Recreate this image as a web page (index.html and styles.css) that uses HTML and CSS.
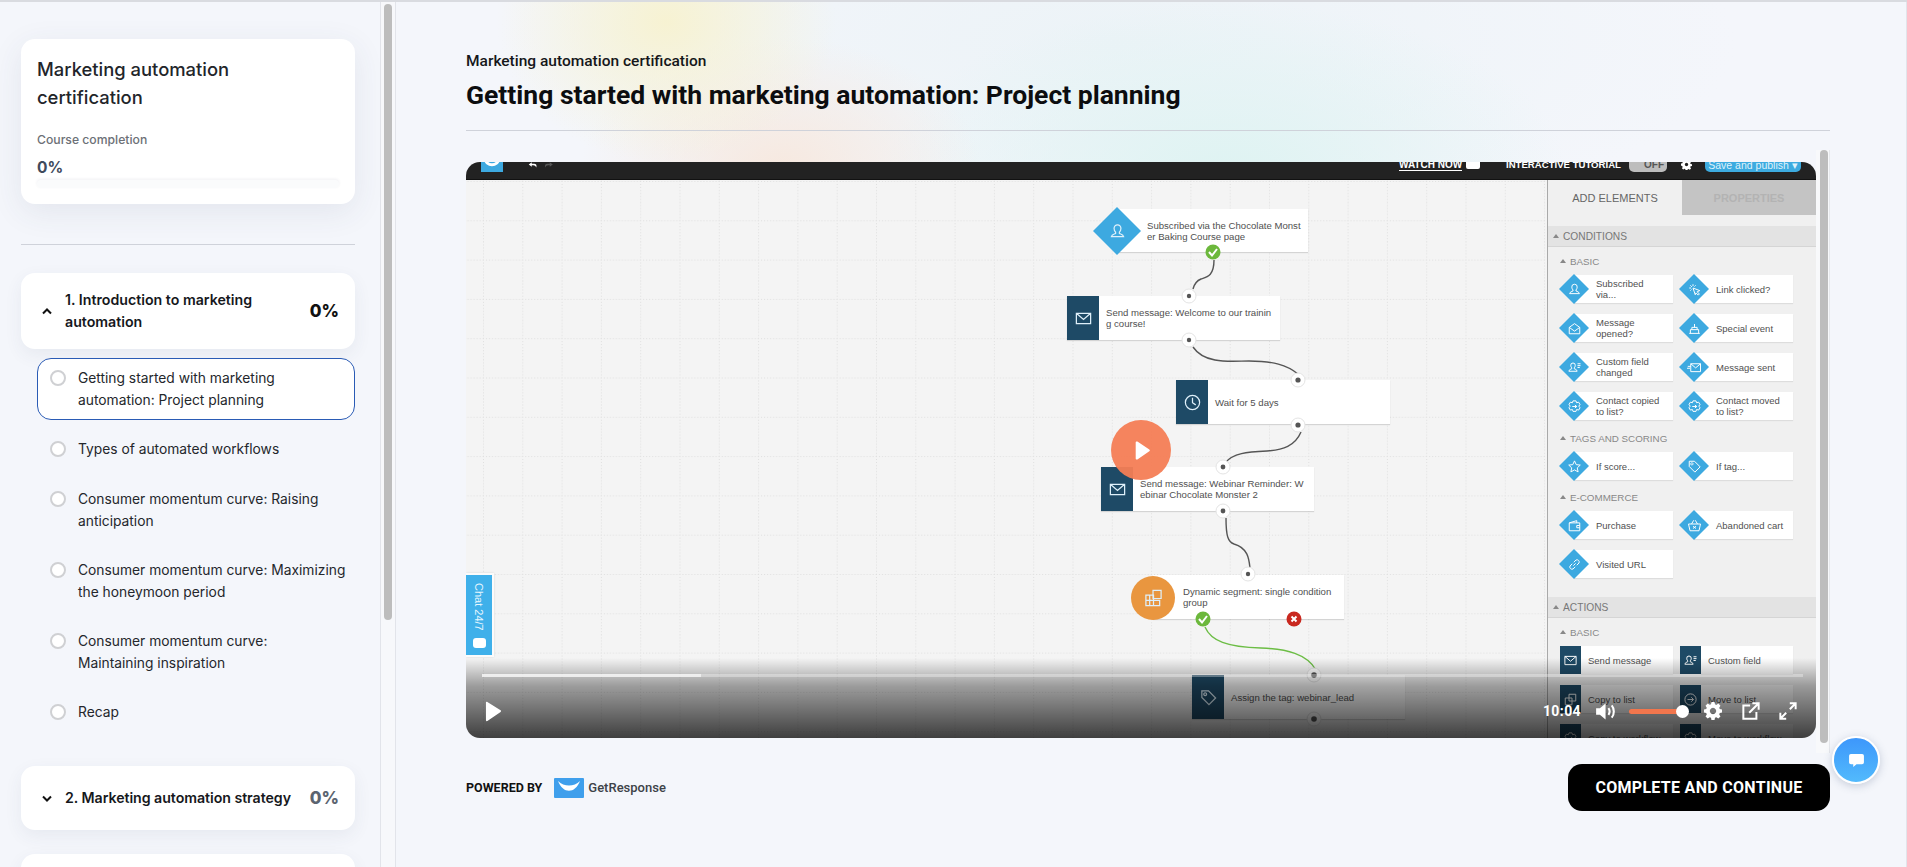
FILE: index.html
```html
<!DOCTYPE html>
<html lang="en">
<head>
<meta charset="utf-8">
<title>Getting started with marketing automation: Project planning</title>
<link rel="stylesheet" href="styles.css">
</head>
<body>
<svg class="defs" width="0" height="0" aria-hidden="true">
  <defs>
    <symbol id="i-user" viewBox="0 0 20 20"><path d="M10 3a3.6 3.6 0 0 0-3.6 3.8c0 1.800.8 3 1.600 3.800v1.400c-1.200.6-4.200 1.200-4.500 3.500h13c-.3-2.300-3.300-2.900-4.500-3.500v-1.400c.8-.8 1.600-2 1.600-3.800A3.600 3.600 0 0 0 10 3z"/></symbol>
    <symbol id="i-mail" viewBox="0 0 20 20"><path d="M2.500 4.500h15v11h-15zM2.500 4.500l7.500 6.500 7.500-6.500"/></symbol>
    <symbol id="i-clock" viewBox="0 0 20 20"><circle cx="10" cy="10" r="7.500"/><path d="M10 5v5.300l3.400 2.200"/></symbol>
    <symbol id="i-cursor" viewBox="0 0 20 20"><path d="M8 8l9 3.500-3.500 1.500 3 3-1.500 1.500-3-3L11 17zM3 8h2.500M8 3v2.500M4.500 4.500l2 2M11.500 4.500l-1.500 1.500M4.500 11.500l1.500-1.500"/></symbol>
    <symbol id="i-open" viewBox="0 0 20 20"><path d="M3 8.500l7-5 7 5v8.500H3zM3 8.500l7 5 7-5"/></symbol>
    <symbol id="i-cake" viewBox="0 0 20 20"><path d="M3 16.500h14M4.500 16.500v-5h11v5M6.500 11.500v-3h7v3M10 8.500V4"/></symbol>
    <symbol id="i-sent" viewBox="0 0 20 20"><path d="M5 5h13v10.500H5zM5 5l6.500 5.500L18 5M1 8.500h4M0 11h4"/></symbol>
    <symbol id="i-field" viewBox="0 0 20 20"><path d="M8 4a3 3 0 0 0-3 3.200c0 1.500.6 2.500 1.300 3.200v1.300c-1 .5-3.600 1-3.800 3.300h11c-.2-2.300-2.800-2.800-3.800-3.300v-1.300c.7-.7 1.300-1.700 1.300-3.200A3 3 0 0 0 8 4zM14 5h4M14 7.500h4M14 10h3"/></symbol>
    <symbol id="i-gearp" viewBox="0 0 20 20"><path d="M8 2.500h4l.8 2.500 2.700-.8 2 3.400-2 1.900 2 1.900-2 3.400-2.700-.8-.8 2.500H8l-.8-2.500-2.700.8-2-3.400 2-1.900-2-1.900 2-3.400 2.700.8z"/><path d="M7 10h6M10.500 8l2.500 2-2.500 2"/></symbol>
    <symbol id="i-star" viewBox="0 0 20 20"><path d="M10 2.500l2.300 5 5.400.6-4 3.700 1.100 5.400L10 14.500l-4.800 2.700 1.100-5.400-4-3.700 5.400-.6z"/></symbol>
    <symbol id="i-tag" viewBox="0 0 20 20"><path d="M3 3h7l7.500 7.500-7 7L3 10zM6.500 5a1.500 1.500 0 1 0 .01 0"/></symbol>
    <symbol id="i-wallet" viewBox="0 0 20 20"><path d="M3 6.500l10-3v3M3 6.500h14v10.500H3zM17 10h-4v3h4"/></symbol>
    <symbol id="i-basket" viewBox="0 0 20 20"><path d="M2 8h16l-2 9H4zM6 8l3-5M14 8l-3-5M8 11l4 3M12 11l-4 3"/></symbol>
    <symbol id="i-link" viewBox="0 0 20 20"><path d="M8.500 11.500l3-3M7 9l-3 3a3 3 0 0 0 4 4l3-3M13 11l3-3a3 3 0 0 0-4-4L9 7"/></symbol>
    <symbol id="i-copy" viewBox="0 0 20 20"><path d="M8 3h9v9H8zM3 8h9v9H3z"/></symbol>
    <symbol id="i-move" viewBox="0 0 20 20"><circle cx="10" cy="10" r="7.500"/><path d="M6 10h8M11 7l3 3-3 3"/></symbol>
    <symbol id="i-seg" viewBox="0 0 20 20"><path d="M2 6.500h8v11H2zM2 12h8M6 6.500v11M10 12h6.500v5.500H10M9.500 1.500h8.500v8.500H9.500z"/></symbol>
  </defs>
</svg>
<div class="app">
  <aside class="sidebar">
    <div class="sidebar-inner">
      <section class="course-card">
        <h2 class="course-title">Marketing automation certification</h2>
        <p class="course-label">Course completion</p>
        <p class="course-pct">0%</p>
        <div class="course-bar"></div>
      </section>
      <hr class="side-rule">
      <div class="section-head section-open">
        <svg class="chev" viewBox="0 0 10 7"><path d="M1 5.500L5 1.500l4 4"/></svg>
        <span class="section-name">1. Introduction to marketing automation</span>
        <span class="section-pct">0%</span>
      </div>
      <ul class="lessons">
        <li class="lesson lesson-active"><span class="radio"></span><span class="lesson-name">Getting started with marketing automation: Project planning</span></li>
        <li class="lesson"><span class="radio"></span><span class="lesson-name">Types of automated workflows</span></li>
        <li class="lesson lesson-after-single"><span class="radio"></span><span class="lesson-name">Consumer momentum curve: Raising anticipation</span></li>
        <li class="lesson"><span class="radio"></span><span class="lesson-name">Consumer momentum curve: Maximizing the honeymoon period</span></li>
        <li class="lesson"><span class="radio"></span><span class="lesson-name">Consumer momentum curve:<br>Maintaining inspiration</span></li>
        <li class="lesson"><span class="radio"></span><span class="lesson-name">Recap</span></li>
      </ul>
      <div class="section-head section-closed">
        <svg class="chev" viewBox="0 0 10 7"><path d="M1 1.500l4 4 4-4"/></svg>
        <span class="section-name">2. Marketing automation strategy</span>
        <span class="section-pct section-pct-muted">0%</span>
      </div>
      <div class="section-head section-closed section-next"></div>
    </div>
    <div class="side-track"><div class="side-thumb"></div></div>
  </aside>

  <main class="main">
    <div class="lesson-area">
      <header class="lesson-header">
        <p class="lesson-course">Marketing automation certification</p>
        <h1 class="lesson-title">Getting started with marketing automation: Project planning</h1>
      </header>
      <div class="player-wrap">
        <div class="player">
          <div class="topbar">
            <svg class="tb-logo" viewBox="0 0 22 12"><rect width="22" height="12" fill="#3da9e0"/><path d="M4-2c1 9 13 9 14 0" fill="none" stroke="#fff" stroke-width="3"/></svg>
            <svg class="tb-undo" viewBox="0 0 40 10"><path d="M1 3l4-3v2h3c3 0 4 2 3 5-1-2-2-3-4-3H5v2z" fill="#fff"/><path d="M33 3l-4-3v2h-3c-3 0-4 2-3 5 1-2 2-3 4-3h2v2z" fill="#555"/></svg>
            <span class="tb-watch">WATCH NOW</span>
            <span class="tb-cam"></span>
            <span class="tb-tutorial">INTERACTIVE TUTORIAL</span>
            <span class="tb-toggle">OFF</span>
            <svg class="tb-gear" viewBox="0 0 20 20"><path d="M8.300 1h3.400l.5 2.600 1.500.7 2.300-1.400 2.300 2.300-1.500 2.300.6 1.500 2.600.5v3.400l-2.600.5-.6 1.500 1.500 2.300-2.300 2.300-2.300-1.400-1.500.6-.5 2.300H8.300l-.5-2.600-1.500-.6-2.300 1.400-2.300-2.300 1.400-2.300-.6-1.500L0 11.700V8.300l2.500-.5.600-1.500L1.700 4l2.300-2.300 2.300 1.500 1.500-.7z" fill="#fff"/><circle cx="10" cy="10" r="3" fill="#222"/></svg>
            <span class="tb-save">Save and publish ▾</span>
          </div>

          <svg class="gridlines" aria-hidden="true">
            <defs>
              <pattern id="gridtile" x="17" y="1" width="39.300" height="39.300" patternUnits="userSpaceOnUse">
                <path d="M.5 0v39.300M0 .5h39.300" stroke="#dedede" stroke-width="1" stroke-dasharray="1 2" fill="none"/>
              </pattern>
            </defs>
            <rect width="100%" height="100%" fill="url(#gridtile)"/>
          </svg>

          <div class="node node-1"><span class="node-text">Subscribed via the Chocolate Monst<br>er Baking Course page</span></div>
          <div class="diamond-big"><svg class="ico ico-big"><use href="#i-user"/></svg></div>
          <div class="node node-2"><span class="node-sq"><svg class="ico ico-big"><use href="#i-mail"/></svg></span><span class="node-text">Send message: Welcome to our trainin<br>g course!</span></div>
          <div class="node node-3"><span class="node-sq"><svg class="ico ico-big"><use href="#i-clock"/></svg></span><span class="node-text">Wait for 5 days</span></div>
          <div class="node node-4"><span class="node-sq"><svg class="ico ico-big"><use href="#i-mail"/></svg></span><span class="node-text">Send message: Webinar Reminder: W<br>ebinar Chocolate Monster 2</span></div>
          <div class="node node-5"><span class="node-text">Dynamic segment: single condition<br>group</span></div>
          <div class="circle-big"><svg class="ico ico-big"><use href="#i-seg"/></svg></div>
          <div class="node node-6"><span class="node-sq"><svg class="ico ico-big"><use href="#i-tag"/></svg></span><span class="node-text">Assign the tag: webinar_lead</span></div>

          <svg class="wires" viewBox="466 162 1350 576" aria-hidden="true">
            <g fill="none" stroke="#555" stroke-width="1.400">
              <path d="M1214 260c0 16-7 17-13 19-5 2-7 6-8 10"/>
              <path d="M1193 347c12 18 40 14 56 14 24 0 38 4 49 13"/>
              <path d="M1301 432c-6 14-18 18-34 19-20 1-34 2-42 12"/>
              <path d="M1226 518c0 18 2 24 8 26 14 4 15 15 16 24"/>
            </g>
            <path d="M1205 627c6 14 22 20 56 21 26 1 46 6 55 22" fill="none" stroke="#6cbd45" stroke-width="1.400"/>
            <g class="ports">
              <circle cx="1189" cy="296" r="7"/><circle cx="1189" cy="340" r="7"/>
              <circle cx="1298" cy="380" r="7"/><circle cx="1298" cy="425" r="7"/>
              <circle cx="1223" cy="467" r="7"/><circle cx="1223" cy="511" r="7"/>
              <circle cx="1248" cy="574" r="7"/><circle cx="1314" cy="675" r="7"/><circle cx="1314" cy="719" r="7"/>
            </g>
            <g fill="#555">
              <circle cx="1189" cy="296" r="2.200"/><circle cx="1189" cy="340" r="2.200"/>
              <circle cx="1298" cy="380" r="2.600"/><circle cx="1298" cy="425" r="2.600"/>
              <circle cx="1223" cy="467" r="2.400"/><circle cx="1223" cy="511" r="2.400"/>
              <circle cx="1248" cy="574" r="2.200"/><circle cx="1314" cy="675" r="2.800"/><circle cx="1314" cy="719" r="2.800"/>
            </g>
            <g fill="#6cb83c">
              <circle cx="1213" cy="252" r="7.500"/><circle cx="1203" cy="619" r="7.500"/>
            </g>
            <circle cx="1294" cy="619" r="7.500" fill="#c9281f"/>
            <g fill="none" stroke="#fff" stroke-width="2">
              <path d="M1209 252l3 3.500 5-6.500M1199 619l3 3.500 5-6.500"/>
              <path d="M1291.500 616.500l5 5M1296.500 616.500l-5 5"/>
            </g>
          </svg>

          <div class="chat-tab"><span class="chat-tab-text">Chat 24/7</span><span class="chat-tab-icon"></span></div>

          <div class="palette">
            <div class="tabs"><span class="tab tab-on">ADD ELEMENTS</span><span class="tab tab-off">PROPERTIES</span></div>
            <div class="pal-bar"><span class="tri"></span>CONDITIONS</div>
            <div class="pal-sub"><span class="tri"></span>BASIC</div>
            <div class="pal-grid">
              <div class="el"><span class="dia"><svg class="ico"><use href="#i-user"/></svg></span><span class="el-label"><span>Subscribed<br>via...</span></span></div>
              <div class="el"><span class="dia"><svg class="ico"><use href="#i-cursor"/></svg></span><span class="el-label">Link clicked?</span></div>
              <div class="el"><span class="dia"><svg class="ico"><use href="#i-open"/></svg></span><span class="el-label"><span>Message<br>opened?</span></span></div>
              <div class="el"><span class="dia"><svg class="ico"><use href="#i-cake"/></svg></span><span class="el-label">Special event</span></div>
              <div class="el"><span class="dia"><svg class="ico"><use href="#i-field"/></svg></span><span class="el-label"><span>Custom field<br>changed</span></span></div>
              <div class="el"><span class="dia"><svg class="ico"><use href="#i-sent"/></svg></span><span class="el-label">Message sent</span></div>
              <div class="el"><span class="dia"><svg class="ico"><use href="#i-gearp"/></svg></span><span class="el-label"><span>Contact copied<br>to list?</span></span></div>
              <div class="el"><span class="dia"><svg class="ico"><use href="#i-gearp"/></svg></span><span class="el-label"><span>Contact moved<br>to list?</span></span></div>
            </div>
            <div class="pal-sub pal-sub-tags"><span class="tri"></span>TAGS AND SCORING</div>
            <div class="pal-grid">
              <div class="el"><span class="dia"><svg class="ico"><use href="#i-star"/></svg></span><span class="el-label">If score...</span></div>
              <div class="el"><span class="dia"><svg class="ico"><use href="#i-tag"/></svg></span><span class="el-label">If tag...</span></div>
            </div>
            <div class="pal-sub pal-sub-next"><span class="tri"></span>E-COMMERCE</div>
            <div class="pal-grid">
              <div class="el"><span class="dia"><svg class="ico"><use href="#i-wallet"/></svg></span><span class="el-label">Purchase</span></div>
              <div class="el"><span class="dia"><svg class="ico"><use href="#i-basket"/></svg></span><span class="el-label">Abandoned cart</span></div>
              <div class="el"><span class="dia"><svg class="ico"><use href="#i-link"/></svg></span><span class="el-label">Visited URL</span></div>
            </div>
            <div class="pal-bar pal-bar-next"><span class="tri"></span>ACTIONS</div>
            <div class="pal-sub"><span class="tri"></span>BASIC</div>
            <div class="pal-grid">
              <div class="el el-act"><span class="sq"><svg class="ico"><use href="#i-mail"/></svg></span><span class="el-label">Send message</span></div>
              <div class="el el-act"><span class="sq"><svg class="ico"><use href="#i-field"/></svg></span><span class="el-label">Custom field</span></div>
              <div class="el el-act"><span class="sq"><svg class="ico"><use href="#i-copy"/></svg></span><span class="el-label">Copy to list</span></div>
              <div class="el el-act"><span class="sq"><svg class="ico"><use href="#i-move"/></svg></span><span class="el-label">Move to list</span></div>
              <div class="el el-act"><span class="sq"><svg class="ico"><use href="#i-gearp"/></svg></span><span class="el-label">Copy to workflow</span></div>
              <div class="el el-act"><span class="sq"><svg class="ico"><use href="#i-gearp"/></svg></span><span class="el-label">Move to workflow</span></div>
            </div>
          </div>

          <div class="shade"></div>
          <div class="big-play"><svg viewBox="0 0 20 24"><path d="M2 2.500c0-1 1-1.500 2-1l14 9.300c.8.500.8 1.600 0 2.100L4 22.500c-1 .5-2 0-2-1z" fill="#fff"/></svg></div>

          <div class="controls">
            <div class="seek"><div class="seek-done"></div></div>
            <div class="ctrl-row">
              <svg class="c-play" viewBox="0 0 18 22"><path d="M1 1.800c0-.8.8-1.300 1.500-.9l14 8.800c.6.400.6 1.300 0 1.700l-14 9.700c-.7.400-1.500 0-1.500-.9z" fill="#fff"/></svg>
              <span class="c-spacer"></span>
              <span class="c-time">10:04</span>
              <svg class="c-vol" viewBox="0 0 22 18"><path d="M0 5.500h4L10 .5v17l-6-5H0z" fill="#fff"/><path d="M13 5.500c1.500 2 1.500 5 0 7M16.500 2.500c3 3.500 3 9.500 0 13" fill="none" stroke="#fff" stroke-width="2.200"/></svg>
              <div class="c-volbar"><span class="c-knob"></span></div>
              <svg class="c-gear" viewBox="0 0 20 20"><path fill-rule="evenodd" d="M8.300 0h3.400l.5 2.600 1.500.6 2.200-1.400 2.400 2.400-1.400 2.200.6 1.500 2.500.5v3.400l-2.500.5-.6 1.500 1.400 2.200-2.400 2.400-2.200-1.400-1.500.6-.5 2.500H8.300l-.5-2.500-1.500-.6-2.200 1.400-2.400-2.400 1.400-2.200-.6-1.500L0 11.700V8.300l2.500-.5.600-1.500-1.400-2.200 2.400-2.400 2.200 1.400 1.500-.6zM10 6.500a3.500 3.500 0 1 0 .01 0z" fill="#fff"/></svg>
              <svg class="c-share" viewBox="0 0 20 20"><path d="M9 4H1.500v14.500H16V11M8 12L18 2M11.500 1.500h7v7" fill="none" stroke="#fff" stroke-width="2.200"/></svg>
              <svg class="c-full" viewBox="0 0 20 20"><path d="M12 1.500h6.500V8M18 2l-6 6M8 18.500H1.500V12M2 18l6-6" fill="none" stroke="#fff" stroke-width="2.200"/></svg>
            </div>
          </div>
        </div>
        <div class="player-track"><div class="player-thumb"></div></div>
      </div>
      <footer class="lesson-footer">
        <div class="powered">
          <span class="powered-by">POWERED BY</span>
          <svg class="gr-logo" viewBox="0 0 30 20"><rect width="30" height="20" rx="1" fill="#3f9fec"/><path d="M4 3c5 13 17 13 22 0-6 6-16 6-22 0z" fill="#fff"/></svg>
          <span class="gr-name">GetResponse</span>
        </div>
        <button class="cta" type="button">COMPLETE AND CONTINUE</button>
      </footer>
    </div>
  </main>
</div>
<button class="chat-fab" type="button" aria-label="Chat"><svg viewBox="0 0 16 14"><path d="M2 0h12a2 2 0 0 1 2 2v7a2 2 0 0 1-2 2H8l-3.500 3v-3H2a2 2 0 0 1-2-2V2a2 2 0 0 1 2-2z" fill="#fff"/></svg></button>
</body>
</html>
```

FILE: styles.css
```css
* { box-sizing: border-box; }
html, body { margin: 0; height: 100%; overflow: hidden; }
body { background: #f4f6fb; font-family: "Inter", "Liberation Sans", sans-serif; color: #1c1f24; border-top: 2px solid #d9dbe0; }
p, h1, h2, ul { margin: 0; padding: 0; }
ul { list-style: none; }
.defs { position: absolute; }
.app { display: flex; height: 865px; }

/* sidebar */
.sidebar { display: flex; width: 396px; flex: none; height: 100%; overflow: hidden; border-right: 1px solid #e2e4ea; }
.sidebar-inner { width: 381px; flex: none; padding: 37px 25px 0 21px; border-right: 1px solid #e2e4ea; overflow: hidden; }
.side-track { flex: 1; position: relative; background: #f7f8fb; }
.side-thumb { position: absolute; left: 3px; top: 2px; width: 8px; height: 616px; border-radius: 4px; background: #bdbdbd; }
.course-card { background: #fff; border-radius: 14px; height: 165px; padding: 16px 16px 0; box-shadow: 0 8px 32px rgba(60, 70, 100, .09); }
.course-title { font-size: 18.400px; line-height: 28px; font-weight: 500; color: #22252a; }
.course-label { margin-top: 20px; font-size: 12.200px; line-height: 18px; font-weight: 500; color: #6c7076; }
.course-pct { margin-top: 9px; font-size: 15.500px; line-height: 20px; font-weight: 700; color: #3f4a5c; }
.course-bar { margin-top: 2px; height: 8px; border-radius: 4px; background: #fafbfc; box-shadow: 0 -1px 3px rgba(60, 70, 100, .08); }
.side-rule { margin: 40px 0 28px; border: 0; border-top: 1px solid #cfd2da; }
.section-head { display: flex; align-items: center; background: #fff; border-radius: 14px; padding: 16px 16px 16px 21px; box-shadow: 0 6px 18px rgba(60, 70, 100, .07); }
.section-closed { height: 64px; margin-top: 34px; }
.section-next { margin-top: 24px; height: 80px; }
.chev { width: 10px; height: 7px; flex: none; margin-right: 13px; fill: none; stroke: #111; stroke-width: 2; }
.section-name { flex: 1; font-size: 14.200px; line-height: 22px; font-weight: 600; color: #16181c; padding-right: 20px; }
.section-pct { font-size: 17px; font-weight: 800; color: #111; }
.section-pct-muted { color: #5b6470; }
.section-closed .section-name { padding-right: 6px; white-space: nowrap; letter-spacing: -.05px; }
.lessons { margin-left: 16px; margin-top: 9px; display: flex; flex-direction: column; gap: 9px; }
.lesson { display: flex; gap: 12px; padding: 9px 0 9px 13px; font-size: 13.800px; line-height: 22px; color: #24272c; }
.lesson-active { background: #fff; border: 1px solid #2a5bb5; border-radius: 14px; padding: 8px 0 8px 12px; }
.lesson-after-single { margin-top: 1px; }
.radio { width: 16px; height: 16px; flex: none; margin-top: 3px; border: 2px solid #cfd0d3; border-radius: 50%; background: #fff; }
.lesson-name { padding-right: 6px; }

/* main */
.main { flex: 1; min-width: 0; padding-left: 70px; padding-right: 76px; border-right: 1px solid #e2e4ea; height: 100%;
  background:
    radial-gradient(ellipse 170px 140px at 270px 20px, rgba(247, 242, 208, .95), rgba(247, 242, 208, 0)),
    radial-gradient(ellipse 200px 130px at 385px 165px, rgba(247, 232, 222, .95), rgba(247, 232, 222, 0)),
    radial-gradient(ellipse 340px 170px at 830px 170px, rgba(222, 243, 242, 1), rgba(222, 243, 242, 0)),
    radial-gradient(ellipse 620px 200px at 720px 40px, rgba(236, 243, 247, 1), rgba(236, 243, 247, 0)),
    #f4f6fb; }
.lesson-area { display: flex; flex-direction: column; height: 100%; }
.lesson-header { height: 129px; padding-top: 49px; border-bottom: 1px solid #cfd2da; flex: none; }
.lesson-course { font-family: "Roboto", sans-serif; font-size: 15.500px; line-height: 20px; font-weight: 500; color: #15171a; }
.lesson-title { margin-top: 8px; font-family: "Roboto", sans-serif; font-size: 26.500px; line-height: 32px; font-weight: 700; color: #0c0d0f; }
.player-wrap { display: flex; margin-top: 19px; height: 603px; flex: none; }
.player { position: relative; width: 1350px; height: 576px; margin-top: 12px; flex: none; border-radius: 14px; overflow: hidden; background: #f4f4f4; }
.player-track { flex: 1; position: relative; background: #f8f9fb; border-right: 1px solid #e6e8ec; height: 603px; }
.player-thumb { position: absolute; left: 4px; top: 0; width: 8px; height: 593px; border-radius: 4px; background: #bdbdbd; }

/* video: top bar */
.topbar { position: absolute; left: 0; right: 0; top: 0; height: 18px; background: #222; border-bottom: 1px solid #111; overflow: hidden; color: #fff; font-family: "Liberation Sans", sans-serif; font-size: 10px; font-weight: 700; }
.topbar > * { position: absolute; }
.tb-logo { left: 15px; top: -2px; width: 22px; height: 12px; }
.tb-undo { left: 62px; top: 0; width: 30px; height: 8px; }
.tb-watch { left: 933px; top: -2px; line-height: 10px; border-bottom: 1px solid #fff; }
.tb-cam { left: 1000px; top: -4px; width: 14px; height: 11px; background: #fff; border-radius: 2px; }
.tb-tutorial { left: 1040px; top: -2px; line-height: 10px; font-size: 9.600px; }
.tb-toggle { left: 1163px; top: -4px; width: 38px; height: 14px; border-radius: 5px; background: #bdbdbd; color: #555; padding: 2px 0 0 15px; line-height: 10px; }
.tb-gear { left: 1215px; top: -3px; width: 11px; height: 11px; }
.tb-save { left: 1239px; top: -4px; width: 96px; height: 14px; border-radius: 5px; background: #3dabe0; color: #dff2fb; text-align: center; padding-top: 2px; line-height: 10px; font-weight: 400; font-size: 10.500px; }

/* video: canvas */
.gridlines { position: absolute; left: 0; top: 18px; width: 1081px; height: 558px; }
.wires { position: absolute; left: 0; top: 0; width: 1350px; height: 576px; }
.ports circle { fill: #fff; stroke: #e4e4e4; stroke-width: 1; }
.node { position: absolute; display: flex; align-items: center; height: 44px; background: #fff; box-shadow: 0 1px 1px rgba(0, 0, 0, .13); font-family: "Liberation Sans", sans-serif; font-size: 9.600px; line-height: 11px; color: #505050; white-space: nowrap; }
.node-text { padding-left: 7px; }
.node-sq { width: 32px; height: 44px; flex: none; display: flex; align-items: center; justify-content: center; background: #1e4a66; }
.node-1 { left: 651px; top: 47px; width: 191px; height: 43px; padding-left: 23px; }
.node-2 { left: 601px; top: 134px; width: 213px; }
.node-3 { left: 710px; top: 218px; width: 214px; }
.node-4 { left: 635px; top: 305px; width: 213px; }
.node-5 { left: 687px; top: 413px; width: 191px; padding-left: 23px; }
.node-6 { left: 726px; top: 513px; width: 213px; }
.diamond-big { position: absolute; left: 627px; top: 45px; width: 48px; height: 48px; display: flex; align-items: center; justify-content: center; background: #3da9e0; clip-path: polygon(50% 0, 100% 50%, 50% 100%, 0 50%); }
.circle-big { position: absolute; left: 665px; top: 414px; width: 44px; height: 44px; display: flex; align-items: center; justify-content: center; background: #e9963f; border-radius: 50%; }
.ico { width: 15px; height: 15px; fill: none; stroke: #fff; stroke-width: 1.300; }
.ico-big { width: 19px; height: 19px; stroke: #dff0fa; }
.chat-tab { position: absolute; left: 0; top: 411px; width: 28px; height: 84px; background: #3fb0ea; border: 2px solid #fbfbfb; border-left: 0; display: flex; flex-direction: column; align-items: center; padding-top: 8px; color: #e6f6fe; font-family: "Liberation Sans", sans-serif; font-size: 11px; box-shadow: 0 0 2px rgba(0, 0, 0, .12); }
.chat-tab-text { writing-mode: vertical-rl; white-space: nowrap; line-height: 12px; }
.chat-tab-icon { margin-top: 7px; width: 13px; height: 10px; border-radius: 3px; background: #fff; }

/* video: palette */
.palette { position: absolute; left: 1081px; top: 18px; width: 269px; height: 558px; background: #f0f0f0; border-left: 1px solid #a9a9a9; overflow: hidden; font-family: "Liberation Sans", sans-serif; color: #555; }
.tabs { display: flex; height: 35px; font-size: 11px; }
.tab { flex: 1; display: flex; align-items: center; justify-content: center; }
.tab-on { color: #666; }
.tab-off { background: #c4c4c4; color: #b3b3b3; font-weight: 700; }
.pal-bar { margin-top: 11px; height: 21px; display: flex; align-items: center; gap: 4px; padding-left: 5px; background: #e3e3e3; border-bottom: 1px solid #d5d5d5; font-size: 10.200px; color: #777; }
.pal-bar-next { margin-top: 19px; }
.tri { width: 0; height: 0; border-left: 3.500px solid transparent; border-right: 3.500px solid transparent; border-bottom: 4px solid #888; }
.pal-sub { margin-top: 7px; height: 14px; display: flex; align-items: center; gap: 4px; padding-left: 12px; font-size: 9.800px; color: #888; }
.pal-sub-tags { margin-top: 11px; }
.pal-sub-next { margin-top: 10px; }
.pal-grid { display: grid; grid-template-columns: 114px 114px; gap: 11px 6px; margin: 7px 0 0 11px; }
.el { display: flex; height: 28px; align-items: center; font-size: 9.500px; line-height: 10.800px; color: #505050; white-space: nowrap; }
.dia { position: relative; z-index: 1; width: 30px; height: 30px; flex: none; display: flex; align-items: center; justify-content: center; background: #3da9e0; clip-path: polygon(50% 0, 100% 50%, 50% 100%, 0 50%); }
.el-label { flex: 1; align-self: stretch; display: flex; align-items: center; margin-left: -15px; padding: 2px 0 0 22px; background: #fff; box-shadow: 0 1px 1px rgba(0, 0, 0, .08); }
.el-act .el-label { margin-left: 0; padding-left: 7px; }
.sq { width: 21px; height: 28px; flex: none; margin-left: 1px; display: flex; align-items: center; justify-content: center; background: #1e4a66; }

/* video: controls */
.shade { position: absolute; left: 0; right: 0; bottom: 0; height: 80px; background: linear-gradient(to bottom, rgba(0, 0, 0, 0), rgba(0, 0, 0, .36) 35%, rgba(0, 0, 0, .74)); }
.big-play { position: absolute; left: 645px; top: 258px; width: 60px; height: 60px; border-radius: 50%; background: rgba(244, 125, 85, .95); display: flex; align-items: center; justify-content: center; padding-left: 3px; }
.big-play svg { width: 17px; height: 21px; }
.controls { position: absolute; left: 16px; right: 13px; bottom: 0; height: 64px; }
.seek { height: 3px; background: rgba(255, 255, 255, .32); }
.seek-done { width: 219px; height: 3px; background: rgba(255, 255, 255, .62); }
.ctrl-row { display: flex; align-items: center; height: 32px; margin-top: 18px; padding-right: 6px; }
.c-play { width: 17px; height: 21px; margin-left: 3px; flex: none; }
.c-spacer { flex: 1; }
.c-time { font-family: "Roboto", sans-serif; font-size: 14px; font-weight: 700; color: #fff; letter-spacing: .4px; }
.c-vol { width: 21px; height: 17px; margin-left: 15px; flex: none; }
.c-volbar { position: relative; width: 54px; height: 5px; margin-left: 12px; border-radius: 3px; background: #f2764d; flex: none; }
.c-knob { position: absolute; right: -6px; top: -4px; width: 13px; height: 13px; border-radius: 50%; background: #fff; }
.c-gear { width: 18px; height: 18px; margin-left: 21px; flex: none; }
.c-share { width: 18px; height: 18px; margin-left: 20px; flex: none; }
.c-full { width: 18px; height: 18px; margin-left: 19px; flex: none; }

/* footer */
.lesson-footer { display: flex; align-items: center; justify-content: space-between; height: 47px; margin-top: 11px; position: relative; }
.powered { display: flex; align-items: center; }
.powered-by { font-family: "Roboto", sans-serif; font-size: 12.500px; font-weight: 700; color: #111; }
.gr-logo { width: 30px; height: 20px; margin-left: 12px; }
.gr-name { margin-left: 4px; font-family: "Roboto", sans-serif; font-size: 13px; font-weight: 500; color: #3d4248; }
.cta { width: 262px; height: 47px; border: 0; border-radius: 14px; background: #000; color: #fff; font-family: "Roboto", sans-serif; font-size: 16px; font-weight: 700; letter-spacing: .3px; }
.chat-fab { position: absolute; left: 1832px; top: 736px; width: 48px; height: 48px; padding: 0; border: 2px solid #fff; border-radius: 50%; background: linear-gradient(to bottom, #3d97fb, #52bafc); display: flex; align-items: center; justify-content: center; box-shadow: 0 2px 8px rgba(60, 80, 120, .25); }
.chat-fab svg { width: 15px; height: 13px; }
```
